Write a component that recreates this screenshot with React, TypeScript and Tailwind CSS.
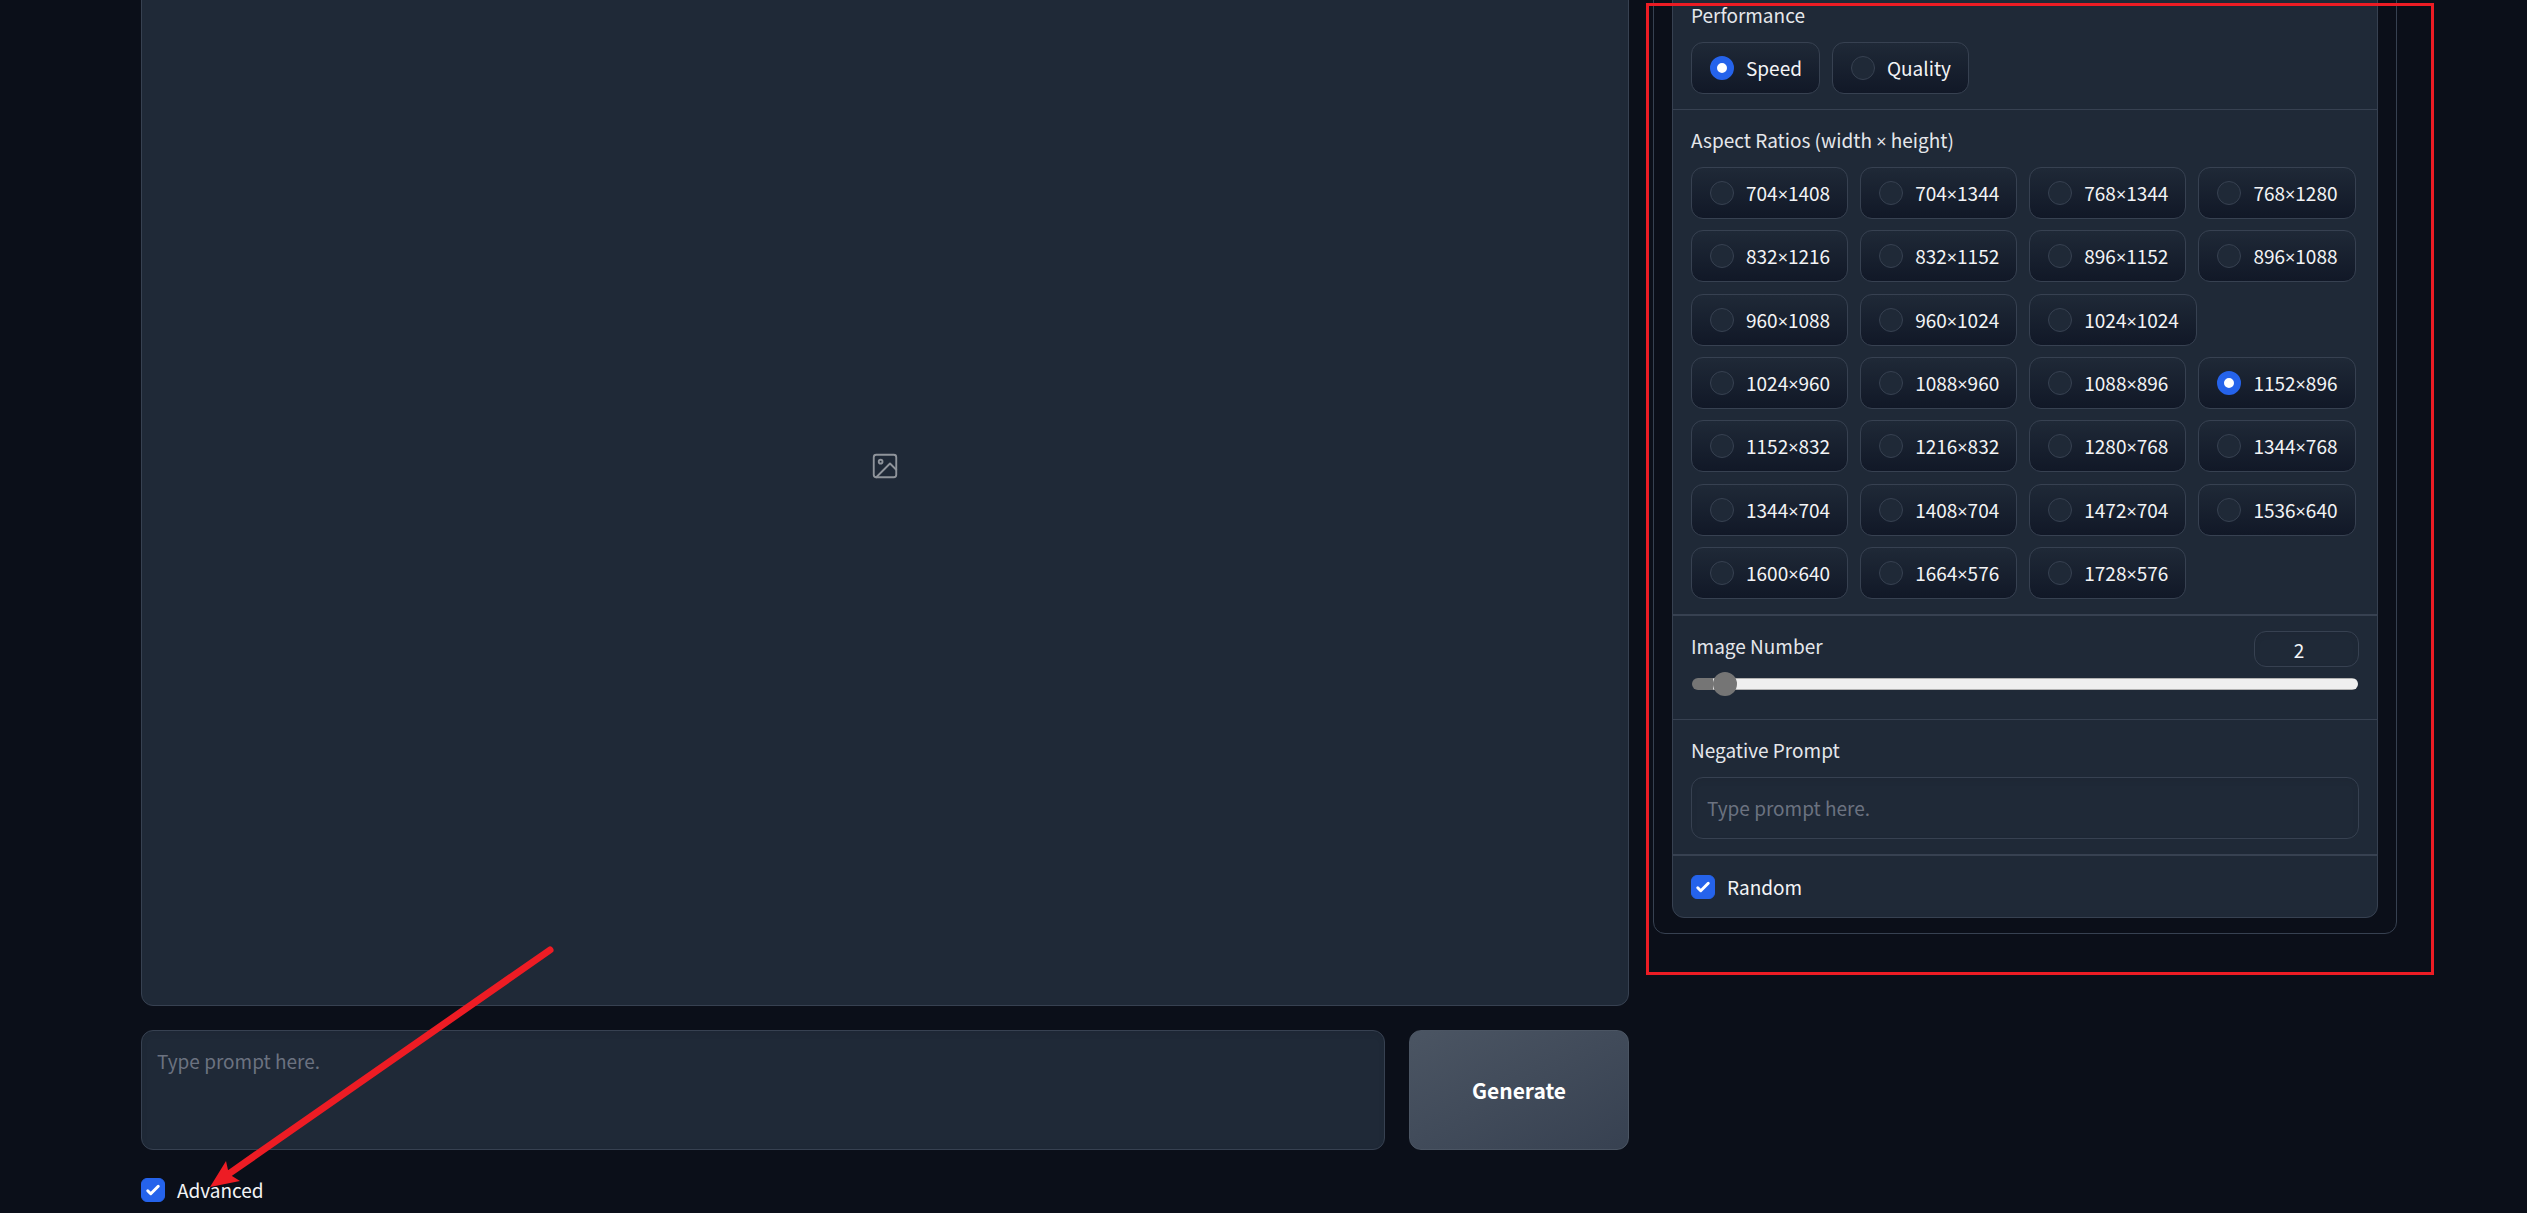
import { Fragment, useState } from "react";

const PERFORMANCE = ["Speed", "Quality"];

const ASPECT_RATIOS = [
  "704×1408", "704×1344", "768×1344", "768×1280",
  "832×1216", "832×1152", "896×1152", "896×1088",
  "960×1088", "960×1024", "1024×1024",
  "1024×960", "1088×960", "1088×896", "1152×896",
  "1152×832", "1216×832", "1280×768", "1344×768",
  "1344×704", "1408×704", "1472×704", "1536×640",
  "1600×640", "1664×576", "1728×576",
];

const MAX_IMAGES = 32;

export default function App() {
  const [performance, setPerformance] = useState("Speed");
  const [ratio, setRatio] = useState("1152×896");
  const [imageNumber, setImageNumber] = useState(2);
  const [random, setRandom] = useState(true);
  const [advanced, setAdvanced] = useState(true);

  const filled = ((imageNumber - 1) / (MAX_IMAGES - 1)) * 100;

  return (
    <div className="min-h-screen overflow-hidden bg-[#0b0f19] font-['Noto_Sans_CJK_SC','Noto_Sans',sans-serif] text-[19px] leading-[30px] text-[#f3f4f6]">
      {/* page is scrolled down a little, the top of both columns is cut off */}
      <main className="-mt-[74px] grid grid-cols-[2fr_1fr] items-start gap-6 pl-[141px] pr-[130px]">
        <section className="relative flex min-w-0 flex-col gap-6">
          <div className="flex h-[1080px] items-center justify-center rounded-xl border border-[#374151] bg-[#1f2937]">
            <ImageIcon />
          </div>

          <div className="flex gap-6">
            <textarea
              aria-label="Prompt"
              placeholder="Type prompt here."
              className="h-[120px] min-w-0 flex-1 resize-none rounded-xl border border-[#374151] bg-[#1f2937] px-[15px] py-[15px] shadow-[inset_0_3px_6px_rgba(0,0,0,0.05)] outline-none placeholder:text-[#6b7280]"
            />
            <button className="w-[220px] rounded-xl border border-[#4b5563] bg-linear-to-br from-[#4b5563] to-[#374151] text-[21px] font-semibold text-white">
              Generate
            </button>
          </div>

          <Checkbox label="Advanced" checked={advanced} onChange={setAdvanced} />

          <Arrow />
        </section>

        {advanced && (
          <aside className="relative min-w-0 rounded-xl border border-[#374151] px-[18px] pt-[57px] pb-[15px]">
            <div className="overflow-hidden rounded-xl border border-[#374151] bg-[#1f2937]">
              <fieldset className="border-b border-[#374151] px-[18px] py-[15px]">
                <legend className="float-left mb-3 w-full text-[#e5e7eb]">Performance</legend>
                <div className="clear-both flex flex-wrap gap-3">
                  {PERFORMANCE.map((p) => (
                    <RadioOption key={p} name="performance" label={p} checked={performance === p} onSelect={setPerformance} />
                  ))}
                </div>
              </fieldset>

              <fieldset className="border-b-2 border-[#374151] px-[18px] py-[15px]">
                <legend className="float-left mb-3 w-full text-[#e5e7eb]">
                  <TimesText text="Aspect Ratios (width × height)" />
                </legend>
                <div className="clear-both flex min-h-[432px] flex-wrap content-between gap-x-3">
                  {ASPECT_RATIOS.map((r) => (
                    <RadioOption key={r} name="ratio" label={r} checked={ratio === r} onSelect={setRatio} />
                  ))}
                </div>
              </fieldset>

              <div className="border-b border-[#374151] px-[18px] pt-[15px] pb-[29px]">
                <div className="mb-[11px] flex items-start justify-between">
                  <label htmlFor="image-number" className="text-[#e5e7eb]">Image Number</label>
                  <input
                    type="number"
                    aria-label="Image Number value"
                    min={1}
                    max={MAX_IMAGES}
                    value={imageNumber}
                    onChange={(e) => setImageNumber(Number(e.target.value))}
                    className="h-9 w-[105px] rounded-xl border border-[#374151] bg-[#1f2937] px-2 text-center shadow-[inset_0_3px_6px_rgba(0,0,0,0.05)] outline-none"
                  />
                </div>
                <div className="px-px">
                  <input
                    id="image-number"
                    type="range"
                    min={1}
                    max={MAX_IMAGES}
                    value={imageNumber}
                    onChange={(e) => setImageNumber(Number(e.target.value))}
                    style={{ backgroundSize: `${filled}% 100%, 100% 100%` }}
                    className="block h-3 w-full appearance-none rounded-full bg-[image:linear-gradient(#757575,#757575),linear-gradient(#b2b2b2_1px,#efefef_1px,#efefef_11px,#b2b2b2_11px)] bg-no-repeat [&::-webkit-slider-runnable-track]:h-3 [&::-webkit-slider-thumb]:-mt-[6px] [&::-webkit-slider-thumb]:size-6 [&::-webkit-slider-thumb]:appearance-none [&::-webkit-slider-thumb]:rounded-full [&::-webkit-slider-thumb]:bg-[#757575]"
                  />
                </div>
              </div>

              <div className="border-b-2 border-[#374151] px-[18px] py-[15px]">
                <label htmlFor="negative" className="mb-3 block text-[#e5e7eb]">Negative Prompt</label>
                <textarea
                  id="negative"
                  rows={1}
                  placeholder="Type prompt here."
                  className="block h-[62px] w-full resize-none rounded-xl border border-[#374151] bg-[#1f2937] px-[15px] py-[15px] shadow-[inset_0_3px_6px_rgba(0,0,0,0.05)] outline-none placeholder:text-[#6b7280]"
                />
              </div>

              <div className="px-[18px] py-[15px]">
                <Checkbox label="Random" checked={random} onChange={setRandom} />
              </div>
            </div>

            {/* red frame around the settings */}
            <div className="pointer-events-none absolute top-[76px] -right-[38px] -bottom-[42px] -left-2 border-3 border-[#ed1c24]" />
          </aside>
        )}
      </main>
    </div>
  );
}

// the CJK font draws × full width, so take that sign from Open Sans
const TimesText = ({ text }: { text: string }) => (
  <span>
    {text.split("×").map((part, i) => (
      <Fragment key={i}>
        {i > 0 && <span className="font-['Open_Sans',sans-serif] text-[18px] leading-none">×</span>}
        {part}
      </Fragment>
    ))}
  </span>
);

interface RadioOptionProps {
  name: string;
  label: string;
  checked: boolean;
  onSelect: (value: string) => void;
}

const RadioOption = ({ name, label, checked, onSelect }: RadioOptionProps) => (
  <label className="flex h-[52px] items-center gap-3 rounded-xl border border-[#374151] bg-linear-to-b from-[#1f2937] to-[#111827] pr-[17px] pl-[18px]">
    <input
      type="radio"
      name={name}
      checked={checked}
      onChange={() => onSelect(label)}
      className="size-6 appearance-none rounded-full border border-[#374151] bg-[#1f2937] checked:border-7 checked:border-[#2563eb] checked:bg-white"
    />
    <TimesText text={label} />
  </label>
);

interface CheckboxProps {
  label: string;
  checked: boolean;
  onChange: (value: boolean) => void;
}

const Checkbox = ({ label, checked, onChange }: CheckboxProps) => (
  <label className="flex h-[31px] items-center gap-3">
    <span className="relative size-6">
      <input
        type="checkbox"
        checked={checked}
        onChange={(e) => onChange(e.target.checked)}
        className="block size-6 appearance-none rounded-md border border-[#374151] bg-[#1f2937] checked:border-[#2563eb] checked:bg-[#2563eb]"
      />
      {checked && (
        <svg viewBox="0 0 16 16" fill="white" className="pointer-events-none absolute inset-0 size-6">
          <path d="M12.207 4.793a1 1 0 0 1 0 1.414l-5 5a1 1 0 0 1-1.414 0l-2-2a1 1 0 0 1 1.414-1.414L6.5 9.086l4.293-4.293a1 1 0 0 1 1.414 0z" />
        </svg>
      )}
    </span>
    <span>{label}</span>
  </label>
);

const ImageIcon = () => (
  <svg
    viewBox="0 0 24 24"
    fill="none"
    stroke="currentColor"
    strokeWidth="1.5"
    strokeLinecap="round"
    strokeLinejoin="round"
    className="size-[30px] text-[#8f949b]"
  >
    <rect x="3" y="3" width="18" height="18" rx="2" ry="2" />
    <circle cx="8.5" cy="8.5" r="1.5" />
    <polyline points="21 15 16 10 5 21" />
  </svg>
);

// points from the image panel down to the Advanced checkbox
const Arrow = () => (
  <svg
    viewBox="0 0 350 250"
    className="pointer-events-none absolute bottom-[11px] left-[67px] h-[250px] w-[350px]"
  >
    <line x1="342" y1="6" x2="22" y2="229" stroke="#ed1c24" strokeWidth="7" strokeLinecap="round" />
    <polygon points="2,243 18,217 20,226 24,232 32,237" fill="#ed1c24" />
  </svg>
);
